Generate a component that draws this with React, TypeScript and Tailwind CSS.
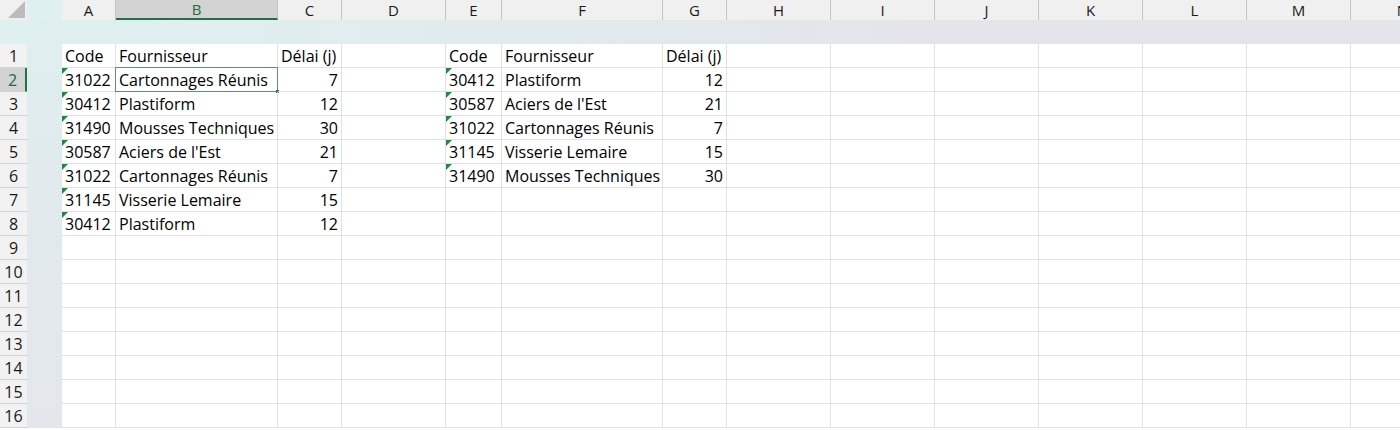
import React from "react";

/* ===================== DATA ===================== */

type Col = { letter: string; w: string };

const COLS: Col[] = [
    { letter: "A", w: "w-[54px]" },
    { letter: "B", w: "w-[162px]" },
    { letter: "C", w: "w-[64px]" },
    { letter: "D", w: "w-[104px]" },
    { letter: "E", w: "w-[56px]" },
    { letter: "F", w: "w-[161px]" },
    { letter: "G", w: "w-[64px]" },
    { letter: "H", w: "w-[104px]" },
    { letter: "I", w: "w-[104px]" },
    { letter: "J", w: "w-[104px]" },
    { letter: "K", w: "w-[104px]" },
    { letter: "L", w: "w-[104px]" },
    { letter: "M", w: "w-[104px]" },
    { letter: "N", w: "w-[104px]" },
];

type Cell = { v: string; num?: boolean; flag?: boolean };

const left: [string, string, number][] = [
    ["31022", "Cartonnages Réunis", 7],
    ["30412", "Plastiform", 12],
    ["31490", "Mousses Techniques", 30],
    ["30587", "Aciers de l'Est", 21],
    ["31022", "Cartonnages Réunis", 7],
    ["31145", "Visserie Lemaire", 15],
    ["30412", "Plastiform", 12],
];

const right: [string, string, number][] = [
    ["30412", "Plastiform", 12],
    ["30587", "Aciers de l'Est", 21],
    ["31022", "Cartonnages Réunis", 7],
    ["31145", "Visserie Lemaire", 15],
    ["31490", "Mousses Techniques", 30],
];

const ROW_COUNT = 16;

// build sheet: rows x cols (A..N)
const sheet: (Cell | null)[][] = Array.from({ length: ROW_COUNT }, () => COLS.map(() => null));
const header: Cell[] = [{ v: "Code" }, { v: "Fournisseur" }, { v: "Délai (j)" }];
header.forEach((c, i) => {
    sheet[0][i] = c;
    sheet[0][i + 4] = c;
});
left.forEach(([code, name, d], r) => {
    sheet[r + 1][0] = { v: code, flag: true };
    sheet[r + 1][1] = { v: name };
    sheet[r + 1][2] = { v: String(d), num: true };
});
right.forEach(([code, name, d], r) => {
    sheet[r + 1][4] = { v: code, flag: true };
    sheet[r + 1][5] = { v: name };
    sheet[r + 1][6] = { v: String(d), num: true };
});

/* ===================== COMPONENT ===================== */

const FONT = "font-['Open_Sans','Liberation_Sans',sans-serif]";

export default function App() {
    return (
        <div className={`w-[1400px] h-[430px] overflow-hidden bg-white text-black ${FONT}`}>
            {/* COLUMN HEADERS */}
            <div className="flex h-[20px]">
                <div className="w-[27px] shrink-0 bg-[#f0f0f0] relative overflow-hidden">
                    <div className="absolute right-[2px] bottom-[2px] w-0 h-0 border-l-[17px] border-l-transparent border-b-[17px] border-b-[#bcbcbc]" />
                </div>
                <div className="w-[35px] shrink-0 bg-[#dff0f0]" />
                {COLS.map(c => {
                    const sel = c.letter === "B";
                    return (
                        <div
                            key={c.letter}
                            className={`${c.w} shrink-0 flex items-center justify-center text-[15px] border-r ${
                                sel
                                    ? "bg-[#d3d3d3] text-[#1d6b3d] border-b-[2px] border-b-[#1f7244] border-r-[#c4c4c4]"
                                    : "bg-[#f0f0f0] text-[#1a1a1a] border-r-[#c4c4c4]"
                            }`}
                        >
                            {c.letter}
                        </div>
                    );
                })}
            </div>

            {/* BAND */}
            <div className="h-[24px] bg-[linear-gradient(to_right,#dff0f0_0%,#e1ebee_35%,#e3e5ea_65%)]" />

            {/* BODY */}
            <div className="flex">
                {/* row headers */}
                <div className="w-[27px] shrink-0 flex flex-col">
                    {Array.from({ length: ROW_COUNT }, (_, i) => {
                        const sel = i === 1;
                        return (
                            <div
                                key={i}
                                className={`h-[24px] flex items-center justify-center pt-[1px] text-[16px] border-b border-b-[#d2d2d2] ${
                                    sel
                                        ? "bg-[#d3d3d3] text-[#1d6b3d] border-r-[2px] border-r-[#1f7244]"
                                        : "bg-[#f2f2f2] text-[#1a1a1a]"
                                }`}
                            >
                                {i + 1}
                            </div>
                        );
                    })}
                </div>

                {/* strip */}
                <div className="w-[35px] shrink-0 bg-[linear-gradient(to_bottom,#dfeeee_0%,#e2e9ed_50%,#e3e7ec_100%)]" />

                {/* cells */}
                <div className="flex flex-col">
                    {sheet.map((row, r) => (
                        <div key={r} className="flex h-[24px]">
                            {row.map((cell, c) => {
                                const selected = r === 1 && c === 1;
                                return (
                                    <div
                                        key={c}
                                        className={`${COLS[c].w} shrink-0 relative border-r border-b border-[#e1e1e1] px-[3px] flex items-end text-[16px] leading-[21px] whitespace-nowrap ${
                                            cell?.num ? "justify-end" : "justify-start"
                                        }`}
                                    >
                                        {cell?.flag && (
                                            <div className="absolute left-0 top-0 w-0 h-0 border-t-[6px] border-t-[#1e8a3c] border-r-[6px] border-r-transparent" />
                                        )}
                                        {selected && (
                                            <>
                                                <div className="absolute -left-px -top-px -right-px -bottom-px border border-[#5e9270]" />
                                                <div className="absolute -right-[2px] -bottom-[2px] w-[3px] h-[3px] bg-[#2f7a4a]" />
                                            </>
                                        )}
                                        {cell?.v}
                                    </div>
                                );
                            })}
                        </div>
                    ))}
                </div>
            </div>
        </div>
    );
}
